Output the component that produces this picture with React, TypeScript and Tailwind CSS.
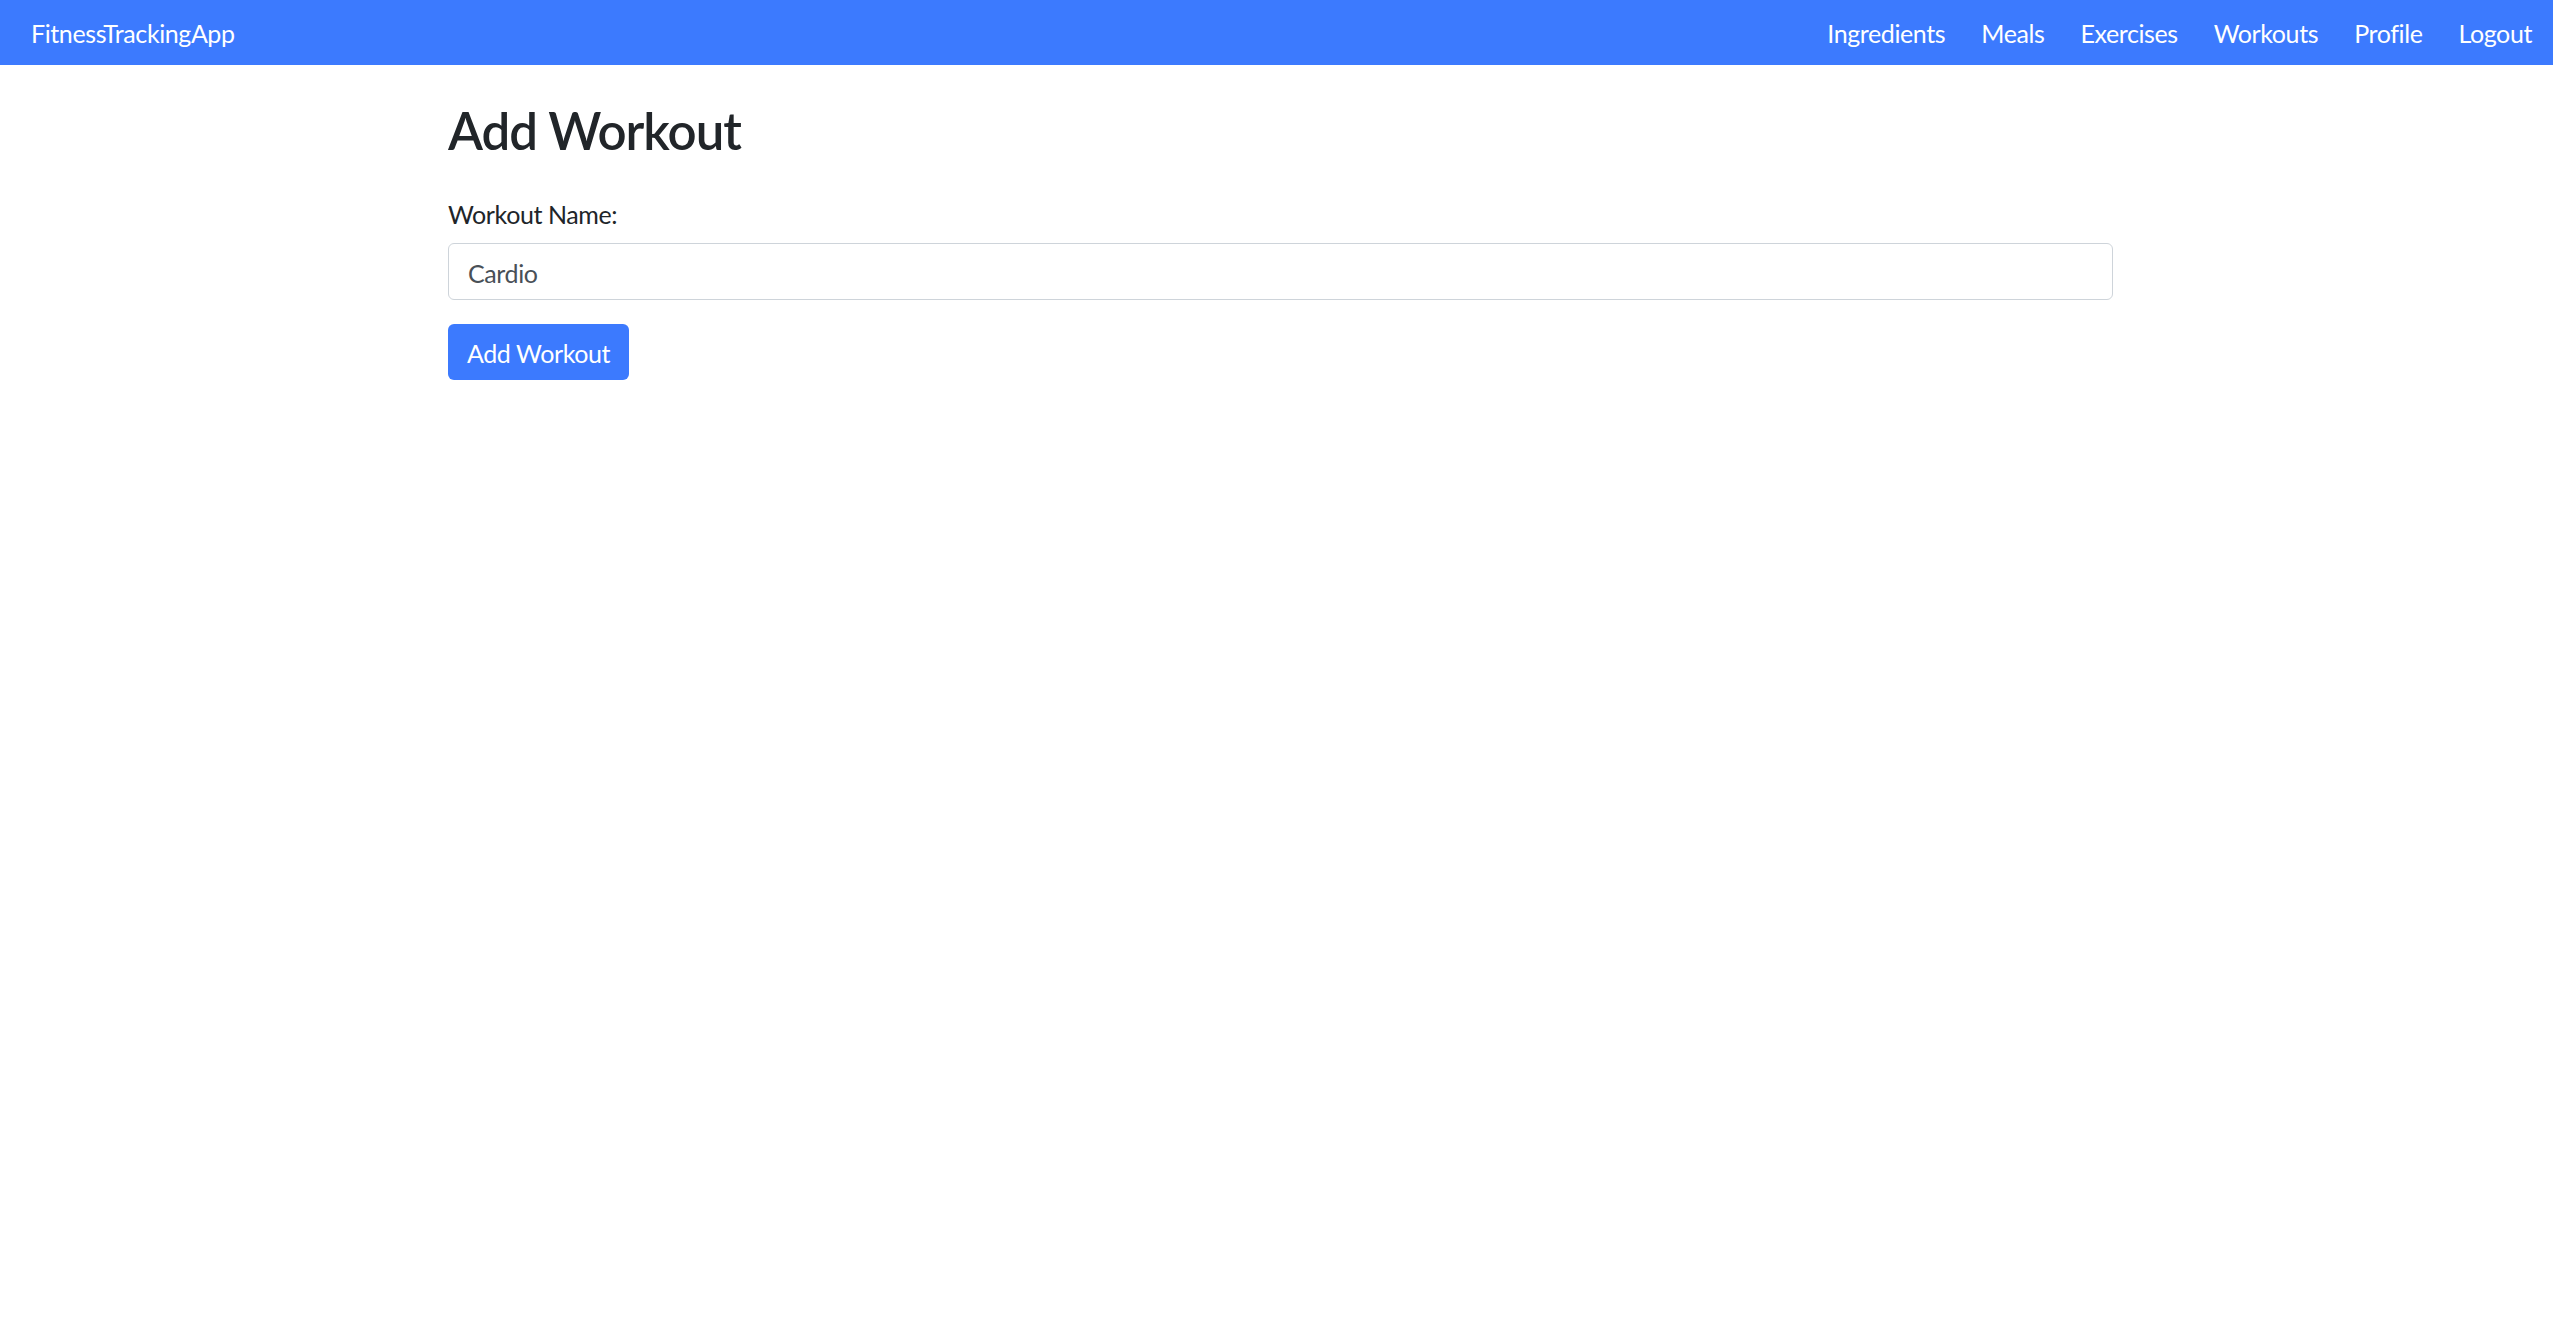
import { useState } from "react";

const navLinks = ["Ingredients", "Meals", "Exercises", "Workouts", "Profile", "Logout"];

function App() {
	const [name, setName] = useState("Cardio");

	return (
		<div className="min-h-screen bg-white font-['Lato',sans-serif] text-[#212529] tracking-[-0.4px]">
			<nav className="h-[65px] bg-[#3c7afe] flex items-center justify-between pl-[31px] pr-[21px] pt-[2px]">
				<a href="#" className="text-white text-[25px]">
					FitnessTrackingApp
				</a>
				<ul className="flex items-center gap-[36px]">
					{navLinks.map((link) => (
						<li key={link}>
							<a href="#" className="text-white text-[25px]">
								{link}
							</a>
						</li>
					))}
				</ul>
			</nav>

			<main className="ml-[448px] w-[1665px] pt-[35px]">
				<h2 className="text-[51px] leading-[1.2] font-semibold tracking-[-1px]">Add Workout</h2>
				<form onSubmit={(e) => e.preventDefault()} className="mt-[35px]">
					<label htmlFor="workoutName" className="block text-[25px] leading-[1.5]">
						Workout Name:
					</label>
					<input
						id="workoutName"
						type="text"
						value={name}
						onChange={(e) => setName(e.target.value)}
						className="mt-[9px] block w-full h-[57px] px-[19px] pt-[3px] text-[25px] text-[#495057] tracking-[-0.4px] border border-[#ced4da] rounded-[6px] outline-none"
					/>
					<button
						type="submit"
						className="mt-[24px] h-[56px] px-[19px] pt-[4px] bg-[#3c7afe] text-white text-[25px] tracking-[-0.4px] rounded-[6px]"
					>
						Add Workout
					</button>
				</form>
			</main>
		</div>
	);
}

export default App;
